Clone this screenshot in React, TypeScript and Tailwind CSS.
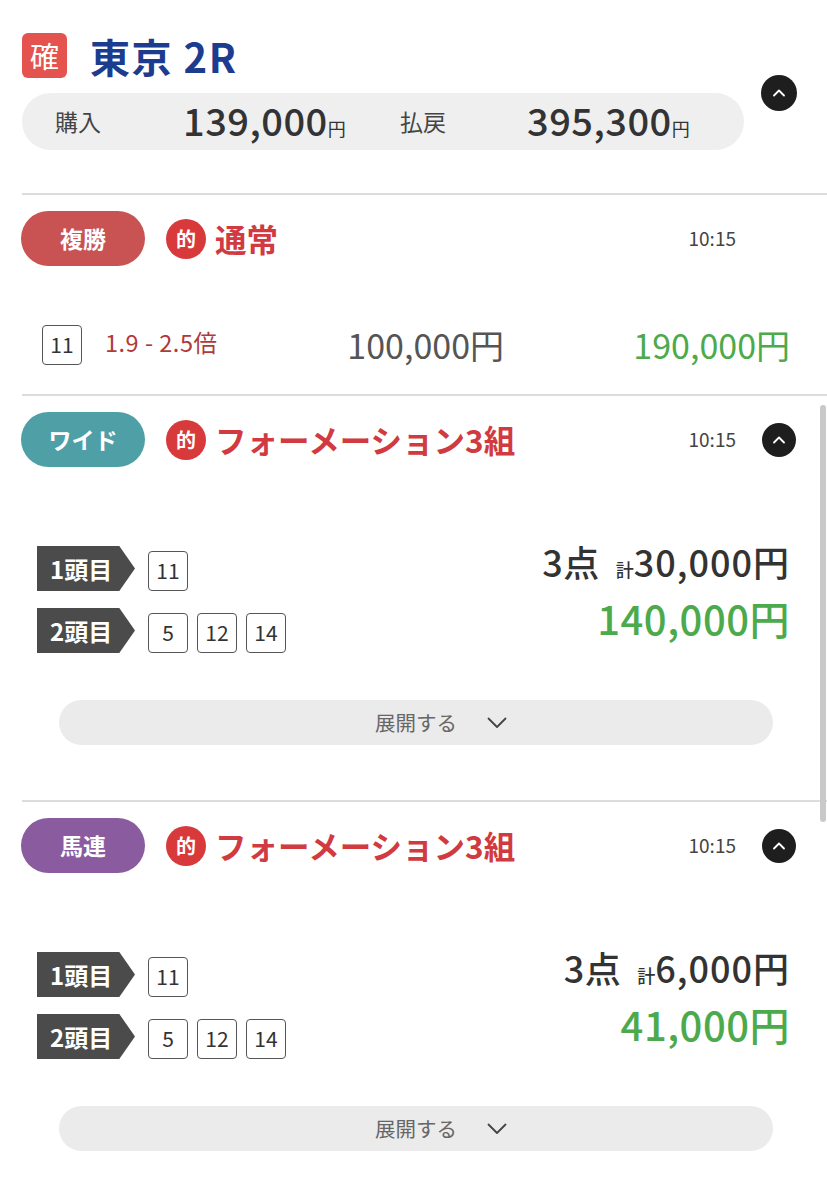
import { ChevronUp } from 'lucide-react';

type Leg = { label: string; horses: number[] };

type Bet = {
  kind: string;
  kindColor: string;
  title: string;
  time: string;
  points: string;
  total: string;
  payout: string;
  legs: Leg[];
};

const FONT = "font-['Noto_Sans_CJK_JP','Noto_Sans',sans-serif]";

const formationBets: Bet[] = [
  {
    kind: 'ワイド',
    kindColor: 'bg-[#4f9fa7]',
    title: 'フォーメーション3組',
    time: '10:15',
    points: '3点',
    total: '30,000円',
    payout: '140,000円',
    legs: [
      { label: '1頭目', horses: [11] },
      { label: '2頭目', horses: [5, 12, 14] },
    ],
  },
  {
    kind: '馬連',
    kindColor: 'bg-[#8a5b9f]',
    title: 'フォーメーション3組',
    time: '10:15',
    points: '3点',
    total: '6,000円',
    payout: '41,000円',
    legs: [
      { label: '1頭目', horses: [11] },
      { label: '2頭目', horses: [5, 12, 14] },
    ],
  },
];

const HorseBox = ({ n }: { n: number }) => (
  <div className="w-[40px] h-[40px] rounded-[4px] border-[1.5px] border-[#555] flex items-center justify-center text-[21px] text-[#333]">
    {n}
  </div>
);

const UpButton = ({ big = false }: { big?: boolean }) => (
  <div
    className={
      big
        ? 'w-[36px] h-[36px] rounded-full bg-[#1e1e1e] flex items-center justify-center'
        : 'w-[34px] h-[34px] rounded-full bg-[#1e1e1e] flex items-center justify-center'
    }
  >
    <ChevronUp size={20} strokeWidth={2.2} className="text-white" />
  </div>
);

const BetHeader = ({
  kind,
  kindColor,
  title,
  time,
  collapsible,
}: {
  kind: string;
  kindColor: string;
  title: string;
  time: string;
  collapsible: boolean;
}) => (
  <div className="flex items-center h-[55px] pl-[21px] pr-[31px]">
    <div
      className={`${kindColor} w-[124px] h-[55px] rounded-full flex items-center justify-center text-white text-[23px] font-bold`}
    >
      {kind}
    </div>
    <div className="ml-[21px] w-[40px] h-[40px] rounded-full bg-[#d8393b] flex items-center justify-center text-white text-[20px] font-bold">
      的
    </div>
    <div className="ml-[9px] text-[#d13a40] text-[31.5px] font-bold leading-none">{title}</div>
    <div className="ml-auto text-[19px] text-[#444]">{time}</div>
    <div className="ml-[26px] w-[34px] h-[34px]">{collapsible && <UpButton />}</div>
  </div>
);

const LegTag = ({ label }: { label: string }) => (
  <div className="w-[98px] h-[45px] bg-[#4b4b4b] [clip-path:polygon(0_0,84%_0,100%_50%,84%_100%,0_100%)] flex items-center pl-[13px] text-white text-[24px] font-bold">
    {label}
  </div>
);

const ExpandButton = () => (
  <div className="h-[45px] rounded-full bg-[#ebebeb] flex items-center justify-center">
    <span className="relative text-[20.5px] text-[#666]">
      展開する
      <svg
        width="20"
        height="12"
        viewBox="0 0 20 12"
        className="absolute left-full top-1/2 -translate-y-1/2 ml-[30px]"
      >
        <polyline points="1.5,1.5 10,10 18.5,1.5" fill="none" stroke="#444" strokeWidth="1.8" strokeLinecap="round" strokeLinejoin="round" />
      </svg>
    </span>
  </div>
);

const FormationSection = ({ bet }: { bet: Bet }) => (
  <section className="border-t-2 border-[#dcdcdc] ml-[22px]">
    <div className="-ml-[22px] pt-[16px]">
      <BetHeader
        kind={bet.kind}
        kindColor={bet.kindColor}
        title={bet.title}
        time={bet.time}
        collapsible
      />
    </div>
    <div className="flex items-start mt-[79px] pl-[15px] pr-[37px]">
      <div className="flex flex-col gap-[17px]">
        {bet.legs.map((leg) => (
          <div key={leg.label} className="flex items-end">
            <LegTag label={leg.label} />
            <div className="flex gap-[9px] ml-[13px]">
              {leg.horses.map((h) => (
                <HorseBox key={h} n={h} />
              ))}
            </div>
          </div>
        ))}
      </div>
      <div className="ml-auto flex flex-col items-end -mt-[3px]">
        <div className="flex items-baseline text-[#333] leading-none">
          <span className="text-[36px] font-medium tracking-[0.5px]">{bet.points}</span>
          <span className="ml-[16px] text-[18px] font-medium">計</span>
          <span className="text-[36px] font-medium tracking-[1px]">{bet.total}</span>
        </div>
        <div className="mt-[19px] text-[#4caa4c] text-[40px] font-medium leading-none tracking-[0.5px]">
          {bet.payout}
        </div>
      </div>
    </div>
    <div className="mt-[47px] ml-[37px] mr-[54px]">
      <ExpandButton />
    </div>
    <div className="h-[55px]" />
  </section>
);

export default function App() {
  return (
    <div className={`${FONT} relative w-[827px] min-h-[1200px] bg-white overflow-hidden`}>
      {/* race header */}
      <div className="pt-[33px] pl-[22px]">
        <div className="flex items-center">
          <div className="w-[45px] h-[45px] rounded-[6px] bg-[#e5534f] flex items-center justify-center text-white text-[29px]">
            確
          </div>
          <h1 className="ml-[23px] text-[#1b3c8f] text-[40px] font-bold leading-none tracking-[1.5px]">東京 2R</h1>
        </div>
        <div className="flex items-start mt-[15px]">
          <div className="w-[722px] h-[57px] rounded-full bg-[#efefef] flex items-center pl-[33px] text-[#333]">
            <span className="w-[128px] text-[23px] text-[#444]">購入</span>
            <span className="w-[217px] flex items-baseline">
              <span className="text-[38px] font-medium leading-none tracking-[0.5px]">139,000</span>
              <span className="text-[18px]">円</span>
            </span>
            <span className="w-[127px] text-[23px] text-[#444]">払戻</span>
            <span className="flex items-baseline">
              <span className="text-[38px] font-medium leading-none tracking-[0.5px]">395,300</span>
              <span className="text-[18px]">円</span>
            </span>
          </div>
          <div className="ml-[17px] -mt-[18px]">
            <UpButton big />
          </div>
        </div>
      </div>

      {/* 複勝 */}
      <section className="mt-[43px] border-t-2 border-[#dcdcdc] ml-[22px]">
        <div className="-ml-[22px] pt-[16px]">
          <BetHeader kind="複勝" kindColor="bg-[#c95253]" title="通常" time="10:15" collapsible={false} />
        </div>
        <div className="flex items-center mt-[59px] pl-[20px] pr-[37px] h-[40px]">
          <HorseBox n={11} />
          <span className="ml-[23px] -mt-[4px] text-[23.5px] text-[#b0393b] tracking-[0.5px]">1.9 - 2.5倍</span>
          <span className="ml-auto text-[34px] text-[#555] leading-none">100,000円</span>
          <span className="w-[286px] text-right text-[34px] text-[#4caa4c] leading-none">190,000円</span>
        </div>
        <div className="h-[29px]" />
      </section>

      {formationBets.map((bet, i) => (
        <FormationSection key={i} bet={bet} />
      ))}

      {/* scrollbar thumb */}
      <div className="absolute right-[1px] top-[405px] w-[6px] h-[417px] rounded-full bg-[#c9c9c9]" />
    </div>
  );
}
